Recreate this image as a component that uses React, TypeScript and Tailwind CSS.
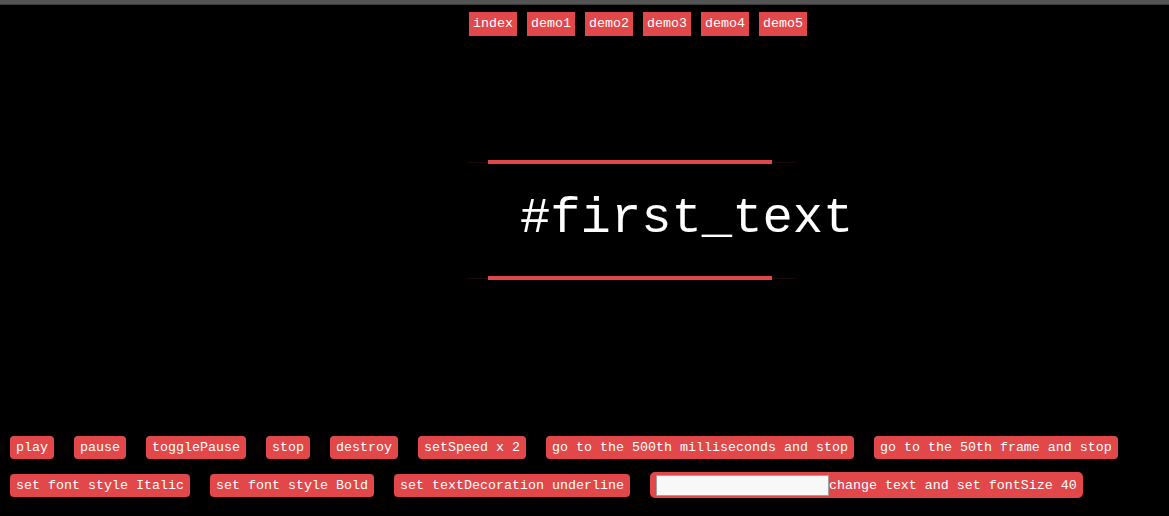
import React from "react";

const mono = { fontFamily: '"Liberation Mono", "DejaVu Sans Mono", monospace' };

function Btn({ children }: { children: React.ReactNode }) {
  return (
    <button className="shrink-0 h-[23px] rounded-[4px] bg-[#e2474a] px-[6px] text-[13.33px] leading-[23px] text-white whitespace-pre">
      {children}
    </button>
  );
}

export default function App() {
  const nav = ["index", "demo1", "demo2", "demo3", "demo4", "demo5"];
  const row1 = [
    "play",
    "pause",
    "togglePause",
    "stop",
    "destroy",
    "setSpeed x 2",
    "go to the 500th milliseconds and stop",
    "go to the 50th frame and stop",
  ];
  const row2 = ["set font style Italic", "set font style Bold", "set textDecoration underline"];
  return (
    <div className="w-[1169px] h-[516px] bg-black overflow-hidden flex flex-col" style={mono}>
      <div className="h-[5px] bg-[#545454] border-b border-[#3a3a3a]" />
      <div className="mt-[7px] ml-[469px] flex gap-[10px]">
        {nav.map((n) => (
          <a key={n} className="h-[24px] min-w-[48px] bg-[#e2474a] px-[4px] text-[13.33px] leading-[24px] text-white text-center">
            {n}
          </a>
        ))}
      </div>
      <div className="h-[400px] flex flex-col">
        <div className="mt-[124px] ml-[467px] w-[328px] flex flex-col">
          <div className="h-[4px] flex items-center">
            <div className="w-[21px] h-px bg-[#1c0808]" />
            <div className="w-[284px] h-[4px] bg-[#e2474a]" />
            <div className="w-[23px] h-px bg-[#1c0808]" />
          </div>
          <div className="h-[112px] flex items-center">
            <span className="ml-[53px] mt-[-2px] text-[50.5px] leading-[60px] text-white whitespace-pre">#first_text</span>
          </div>
          <div className="h-[4px] flex items-center">
            <div className="w-[21px] h-px bg-[#1c0808]" />
            <div className="w-[284px] h-[4px] bg-[#e2474a]" />
            <div className="w-[23px] h-px bg-[#1c0808]" />
          </div>
        </div>
      </div>
      <div className="ml-[10px] flex gap-[20px]">
        {row1.map((t) => (
          <Btn key={t}>{t}</Btn>
        ))}
      </div>
      <div className="mt-[13px] ml-[10px] flex items-center gap-[20px]">
        {row2.map((t) => (
          <Btn key={t}>{t}</Btn>
        ))}
        <div className="flex items-center h-[26px] rounded-[5px] bg-[#e2474a] px-[6px] text-[13.33px] leading-[17px] text-white">
          <input className="w-[173px] h-[21px] bg-[#f8f8f8] border border-[#a0a0a0] outline-none" />
          <span className="whitespace-pre">change text and set fontSize 40</span>
        </div>
      </div>
    </div>
  );
}
